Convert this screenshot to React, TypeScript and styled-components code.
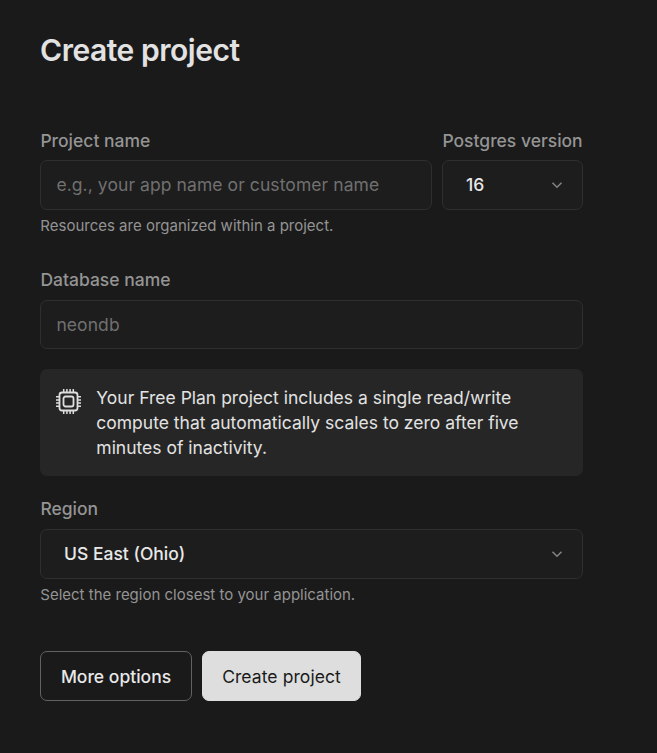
import React from "react";
import styled, { createGlobalStyle } from "styled-components";

const GlobalStyle = createGlobalStyle`
  *, *::before, *::after { box-sizing: border-box; }
  body {
    margin: 0;
    background: #1a1a1a;
    color: #e2e2e2;
    font-family: Inter, "Liberation Sans", sans-serif;
    font-size: 17.5px;
  }
`;

const Page = styled.main`
  width: 583px;
  min-height: 753px;
  padding: 31px 0 52px 40px;
`;

const Title = styled.h1`
  margin: 0 0 57px;
  height: 38px;
  font-size: 30px;
  line-height: 38px;
  font-weight: 600;
  letter-spacing: -0.46px;
  color: #e2e2e2;
`;

const Form = styled.form`
  display: flex;
  flex-direction: column;
`;

const Row = styled.div`
  display: grid;
  grid-template-columns: 392px 141px;
  column-gap: 10px;
  align-items: start;
`;

const Field = styled.div<{ $top: number; $labelGap?: number }>`
  display: flex;
  flex-direction: column;
  min-width: 0;
  padding-top: ${(p) => p.$top}px;

  > label {
    margin-bottom: ${(p) => p.$labelGap ?? 7}px;
  }
`;

const Label = styled.label`
  height: 25px;
  padding-left: 0.4px;
  line-height: 25px;
  font-weight: 500;
  white-space: nowrap;
  color: #949494;
`;

const Input = styled.input<{ $height: number }>`
  width: 100%;
  height: ${(p) => p.$height}px;
  padding: 0 15px ${(p) => (p.$height === 50 ? 2 : 0)}px 15.4px;
  border: 1px solid #2f2f2f;
  border-radius: 7px;
  outline: none;
  background: #1d1d1d;
  color: #e2e2e2;
  font: inherit;
  letter-spacing: 0.08px;

  &::placeholder {
    color: #707070;
    opacity: 1;
  }
`;

const Select = styled.button`
  display: flex;
  align-items: center;
  justify-content: space-between;
  width: 100%;
  height: 50px;
  padding: 0 19px 1px 23px;
  border: 1px solid #2f2f2f;
  border-radius: 7px;
  background: #1d1d1d;
  color: #e8e8e8;
  font: inherit;
  font-weight: 500;
`;

const Chevron = styled.svg`
  width: 12px;
  height: 12px;
  fill: none;
  stroke: #858585;
  stroke-width: 1.5;
`;

const Hint = styled.p`
  height: 20px;
  margin: 6px 0 0;
  padding-left: 0.3px;
  font-size: 15px;
  line-height: 20px;
  color: #949494;
`;

const Notice = styled.section`
  display: flex;
  gap: 15px;
  height: 107px;
  margin-top: 20px;
  padding: 16px 15px;
  border-radius: 7px;
  background: #262626;
`;

const Chip = styled.svg`
  flex: none;
  width: 27px;
  height: 27px;
  margin: 3px -1px 0 0;
  fill: none;
  stroke: #dedede;
  stroke-width: 1.8;
`;

const NoticeText = styled.p`
  width: 440px;
  margin: 0;
  padding-left: 0.3px;
  line-height: 25px;
`;

const Actions = styled.div`
  display: flex;
  gap: 10px;
  margin-top: 46px;
`;

const Button = styled.button<{ $primary?: boolean }>`
  width: ${(p) => (p.$primary ? 159 : 152)}px;
  height: 50px;
  padding: 0;
  border: 1px solid ${(p) => (p.$primary ? "#dedede" : "#626262")};
  border-radius: 7px;
  background: ${(p) => (p.$primary ? "#dedede" : "transparent")};
  color: ${(p) => (p.$primary ? "#1a1a1a" : "#e8e8e8")};
  font: inherit;
  font-weight: ${(p) => (p.$primary ? 400 : 500)};
  letter-spacing: ${(p) => (p.$primary ? "0.08px" : "normal")};
`;

const ChevronIcon = () => (
  <Chevron viewBox="0 0 12 12" aria-hidden="true">
    <path d="M1.5 3.8 6 8.2l4.5-4.4" />
  </Chevron>
);

const ChipIcon = () => (
  <Chip viewBox="0 0 27 27" aria-hidden="true">
    <rect x="4.5" y="4.5" width="18" height="18" rx="2.5" />
    <rect x="8.5" y="8.5" width="10" height="10" rx="2" />
    <path
      strokeWidth="1.5"
      d="M8.7 1v3M11.9 1v3M15.1 1v3M18.3 1v3M8.7 23v3M11.9 23v3M15.1 23v3M18.3 23v3M1 8.7h3M1 11.9h3M1 15.1h3M1 18.3h3M23 8.7h3M23 11.9h3M23 15.1h3M23 18.3h3"
    />
  </Chip>
);

export default function App() {
  return (
    <>
      <GlobalStyle />
      <Page>
        <Title>Create project</Title>
        <Form onSubmit={(e) => e.preventDefault()}>
          <Row>
            <Field $top={2}>
              <Label htmlFor="project">Project name</Label>
              <Input id="project" $height={50} placeholder="e.g., your app name or customer name" />
              <Hint>Resources are organized within a project.</Hint>
            </Field>
            <Field $top={2}>
              <Label htmlFor="version">Postgres version</Label>
              <Select id="version" type="button">
                16
                <ChevronIcon />
              </Select>
            </Field>
          </Row>
          <Field $top={31} $labelGap={8}>
            <Label htmlFor="database">Database name</Label>
            <Input id="database" $height={49} placeholder="neondb" />
          </Field>
          <Notice>
            <ChipIcon />
            <NoticeText>
              Your Free Plan project includes a single read/write compute that automatically scales to zero after five
              minutes of inactivity.
            </NoticeText>
          </Notice>
          <Field $top={20} $labelGap={8}>
            <Label htmlFor="region">Region</Label>
            <Select id="region" type="button">
              US East (Ohio)
              <ChevronIcon />
            </Select>
            <Hint>Select the region closest to your application.</Hint>
          </Field>
          <Actions>
            <Button type="button">More options</Button>
            <Button type="submit" $primary>
              Create project
            </Button>
          </Actions>
        </Form>
      </Page>
    </>
  );
}
